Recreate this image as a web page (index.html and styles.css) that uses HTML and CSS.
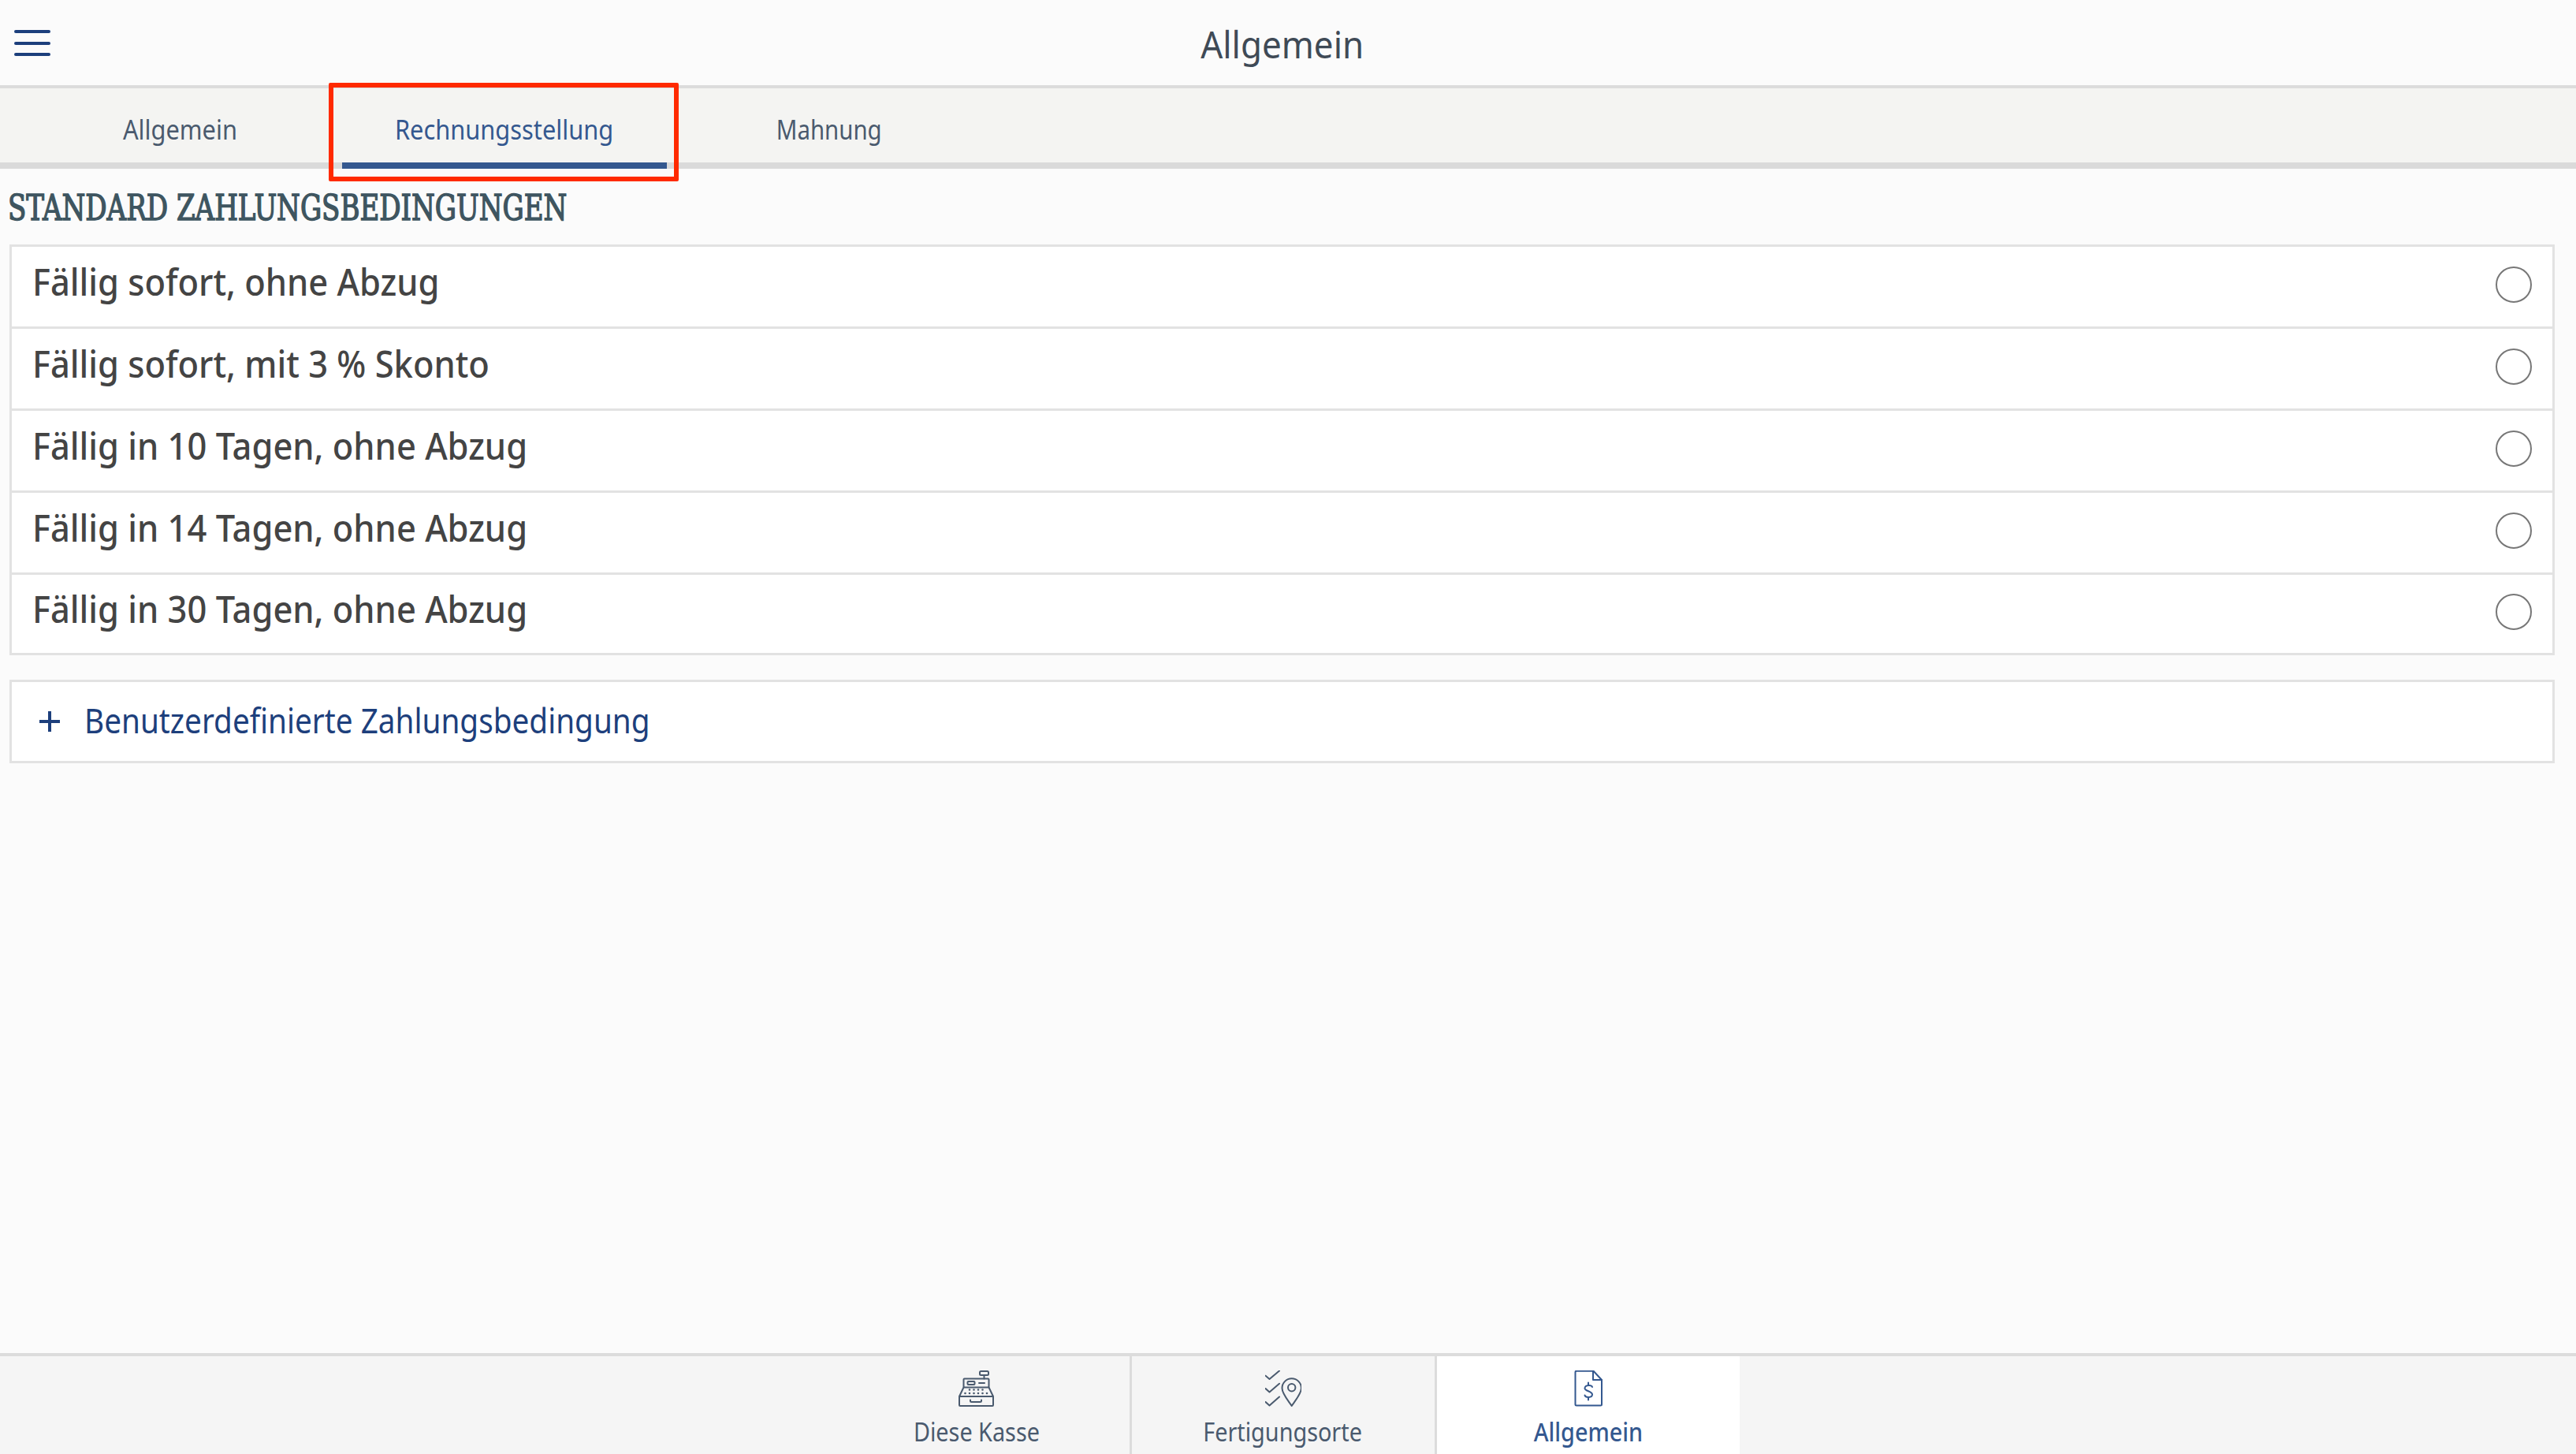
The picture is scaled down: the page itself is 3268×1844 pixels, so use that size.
FILE: index.html
```html
<!DOCTYPE html>
<html lang="de">
<head>
  <meta charset="UTF-8">
  <title>Allgemein</title>
  <link rel="stylesheet" href="styles.css">
</head>
<body>

<!-- Header -->
<header class="topbar">
  <button class="menu" aria-label="Menü"><span></span><span></span><span></span></button>
  <h1>Allgemein</h1>
</header>

<!-- Tabs -->
<nav class="tabs">
  <a class="tab"><span>Allgemein</span></a>
  <a class="tab active"><span>Rechnungsstellung</span><i class="marker"></i></a>
  <a class="tab"><span class="tight">Mahnung</span></a>
</nav>

<main class="content">
  <h2>STANDARD ZAHLUNGSBEDINGUNGEN</h2>
  <ul class="terms">
    <li><span>Fällig sofort, ohne Abzug</span><i class="radio"></i></li>
    <li><span>Fällig sofort, mit 3 % Skonto</span><i class="radio"></i></li>
    <li><span>Fällig in 10 Tagen, ohne Abzug</span><i class="radio"></i></li>
    <li><span>Fällig in 14 Tagen, ohne Abzug</span><i class="radio"></i></li>
    <li><span>Fällig in 30 Tagen, ohne Abzug</span><i class="radio"></i></li>
  </ul>
  <div class="add-term">
    <svg class="plus" viewBox="0 0 26 26"><path d="M13 0v26M0 13h26"/></svg>
    <span>Benutzerdefinierte Zahlungsbedingung</span>
  </div>
</main>

<!-- Bottom navigation -->
<footer class="bottombar">
  <a class="navitem">
    <svg class="icon" viewBox="0 0 46 46">
      <rect x="27" y="1" width="11" height="5" rx="1.5"/>
      <path d="M32.5 6v4.5"/>
      <rect x="6.5" y="10.5" width="32" height="11" rx="1"/>
      <rect x="11.5" y="14" width="9" height="4" rx="1"/>
      <path d="M26 16h7"/>
      <path d="M6.5 21.5L1 33M38.5 21.5L44 33"/>
      <rect x="1" y="33" width="43" height="12" rx="1"/>
      <path d="M15 37.5v1a1.5 1.5 0 0 0 1.5 1.5h11a1.5 1.5 0 0 0 1.5-1.5v-1"/>
      <path class="dots" d="M14 24.5h.01M19.5 24.5h.01M25 24.5h.01M30.500 24.5h.01M8.500 29h.01M14 29h.01M19.500 29h.01M25 29h.01M30.500 29h.01M36 29h.01"/>
    </svg>
    <span>Diese Kasse</span>
  </a>
  <a class="navitem">
    <svg class="icon" viewBox="0 0 46 46">
      <path d="M0.500 6.700L5.500 11L18 0.500"/>
      <path d="M0.500 23L5.500 27.500L18 16.700"/>
      <path d="M0.500 40L5.500 44.500L18 33.500"/>
      <path d="M33.700 45C29 38 21.500 29.500 21.500 22.500a12.200 12.200 0 0 1 24.400 0C45.900 29.500 38.400 38 33.700 45z"/>
      <circle cx="33.700" cy="21.700" r="4.700"/>
    </svg>
    <span>Fertigungsorte</span>
  </a>
  <a class="navitem current">
    <svg class="icon" viewBox="0 0 46 46">
      <path d="M8 .75h21.500L40 12v31a1.500 1.500 0 0 1-1.500 1.500H8A1.500 1.500 0 0 1 6.500 43V2.250A1.500 1.500 0 0 1 8 .75z"/>
      <path d="M29 1v11h11"/>
      <path d="M28 21c-1-3-9-3-9.500 1.500-.3 4 9.500 3.500 9.500 8 0 4.500-8.500 4.500-9.500 1M23 15.500v3M23 34.500v3"/>
    </svg>
    <span>Allgemein</span>
  </a>
</footer>

</body>
</html>
```

FILE: styles.css
```css
* {
  margin: 0;
  padding: 0;
  box-sizing: border-box;
}

body {
  font-family: "Noto Sans", sans-serif;
  background: #fbfbfb;
  width: 3268px;
  height: 1844px;
  overflow: hidden;
  display: flex;
  flex-direction: column;
}

/* Header */
.topbar {
  height: 112px;
  flex: none;
  display: flex;
  align-items: center;
  justify-content: center;
  padding-right: 14px;
  border-bottom: 4px solid #dcdcdc;
  position: relative;
}

.topbar h1 {
  font-size: 47px;
  font-weight: 400;
  color: #3f4a56;
  transform: scaleX(0.935);
  position: relative;
  top: 2px;
}

.menu {
  position: absolute;
  left: 18px;
  top: 38px;
  width: 46px;
  height: 33px;
  background: none;
  border: none;
  display: flex;
  flex-direction: column;
  justify-content: space-between;
}

.menu span {
  height: 4px;
  background: #1c3f7c;
  border-radius: 2px;
}

/* Tabs */
.tabs {
  height: 102px;
  flex: none;
  display: flex;
  padding-left: 22px;
  background: #f4f4f2;
  border-bottom: 8px solid #dadada;
}

.tab {
  width: 412px;
  height: 102px;
  display: flex;
  align-items: center;
  justify-content: center;
  font-size: 35px;
  color: #4a5a6e;
  position: relative;
}

.tab span {
  transform: scaleX(0.88);
}

.tab span.tight {
  transform: scaleX(0.84);
}

.tab.active {
  color: #34588f;
}

.marker {
  position: absolute;
  left: 0;
  right: 0;
  bottom: 0;
  height: 8px;
  background: #34588f;
}

/* annotation box around the active tab */
.tab.active::after {
  content: "";
  position: absolute;
  left: -17px;
  right: -15px;
  top: -7px;
  bottom: -16px;
  border: 6px solid #ff2a00;
  border-radius: 2px;
}

/* Content */
.content {
  flex: 1;
  padding: 0 27px 0 12px;
}

.content h2 {
  font-family: "DejaVu Serif", serif;
  font-stretch: condensed;
  font-size: 44px;
  font-weight: 400;
  -webkit-text-stroke: 1.4px #3e5560;
  color: #3e5560;
  height: 96px;
  line-height: 52px;
  padding-top: 24px;
  margin-left: -2px;
  transform: scaleX(0.86);
  transform-origin: left;
}

.terms {
  list-style: none;
  background: #fff;
  border: 3px solid #e2e2e2;
}

.terms li {
  height: 104px;
  display: flex;
  align-items: center;
  justify-content: space-between;
  padding: 0 26px 0 26px;
  font-size: 47px;
  font-weight: 500;
  color: #444;
  border-bottom: 3px solid #e2e2e2;
}

.terms li:last-child {
  border-bottom: none;
  height: 99px;
}

.terms span {
  position: relative;
  top: -7px;
  transform: scaleX(0.925);
  transform-origin: left;
}

.radio {
  width: 46px;
  height: 46px;
  border: 2.5px solid #777;
  border-radius: 50%;
  position: relative;
  top: -3px;
}

.add-term {
  height: 106px;
  margin-top: 31px;
  background: #fff;
  border: 3px solid #e2e2e2;
  display: flex;
  align-items: center;
  padding-left: 35px;
  gap: 31px;
  font-size: 44px;
  color: #1d3f7c;
}

.add-term span {
  transform: scaleX(0.88);
  transform-origin: left;
  position: relative;
  top: -2px;
}

.plus {
  width: 26px;
  height: 26px;
  stroke: #1d3f7c;
  stroke-width: 4;
  fill: none;
}

/* Bottom navigation */
.bottombar {
  height: 128px;
  flex: none;
  display: flex;
  justify-content: center;
  padding-right: 16px;
  background: #f5f5f5;
  border-top: 4px solid #dcdcdc;
}

.navitem {
  width: 387px;
  display: flex;
  flex-direction: column;
  align-items: center;
  padding-top: 18px;
  gap: 10px;
  font-size: 32px;
  line-height: 44px;
  color: #4a5a6e;
  border-left: 3px solid #dcdcdc;
}

.navitem span {
  transform: scaleX(0.9);
}

.navitem:first-child {
  border-left: none;
}

.navitem.current {
  background: #fff;
  color: #34588f;
  font-weight: 500;
}

.icon {
  width: 46px;
  height: 46px;
  fill: none;
  stroke: currentColor;
  stroke-width: 2;
  stroke-linecap: round;
  stroke-linejoin: round;
  flex: none;
}

.icon .dots {
  stroke-width: 2.6;
}
```
